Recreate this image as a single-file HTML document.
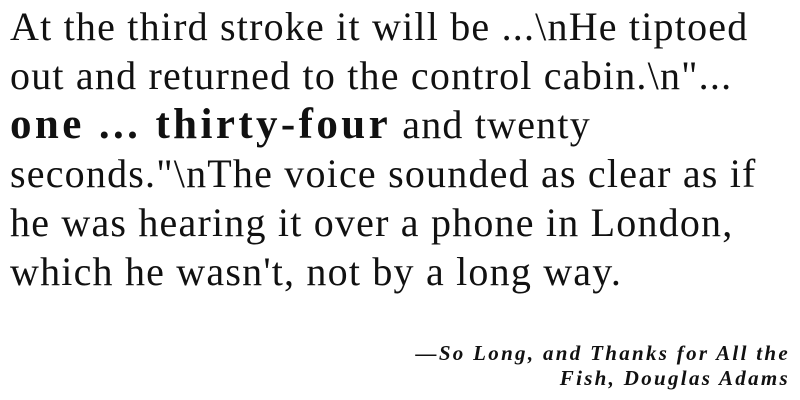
<!DOCTYPE html>
<html><head><meta charset="utf-8"><style>
html,body{margin:0;padding:0;background:#fff;width:800px;height:400px;overflow:hidden}
body{font-family:"Liberation Serif",serif;color:#111}
.q{position:absolute;left:10px;top:2px;font-size:40px;line-height:49px;letter-spacing:1.2px;font-weight:300}
.q div{white-space:nowrap}
b{font-weight:900;font-size:43px;letter-spacing:3.4px;line-height:40px}
.a{position:absolute;right:10px;top:341px;font-size:21px;line-height:25px;font-weight:bold;font-style:italic;text-align:right;letter-spacing:2.3px}
</style></head><body>
<div class="q">
<div>At the third stroke it will be ...\nHe tiptoed</div>
<div>out and returned to the control cabin.\n"...</div>
<div><b>one ... thirty-four</b> and twenty</div>
<div>seconds."\nThe voice sounded as clear as if</div>
<div>he was hearing it over a phone in London,</div>
<div>which he wasn't, not by a long way.</div>
</div>
<div class="a">—So Long, and Thanks for All the<br>Fish, Douglas Adams</div>
</body></html>
